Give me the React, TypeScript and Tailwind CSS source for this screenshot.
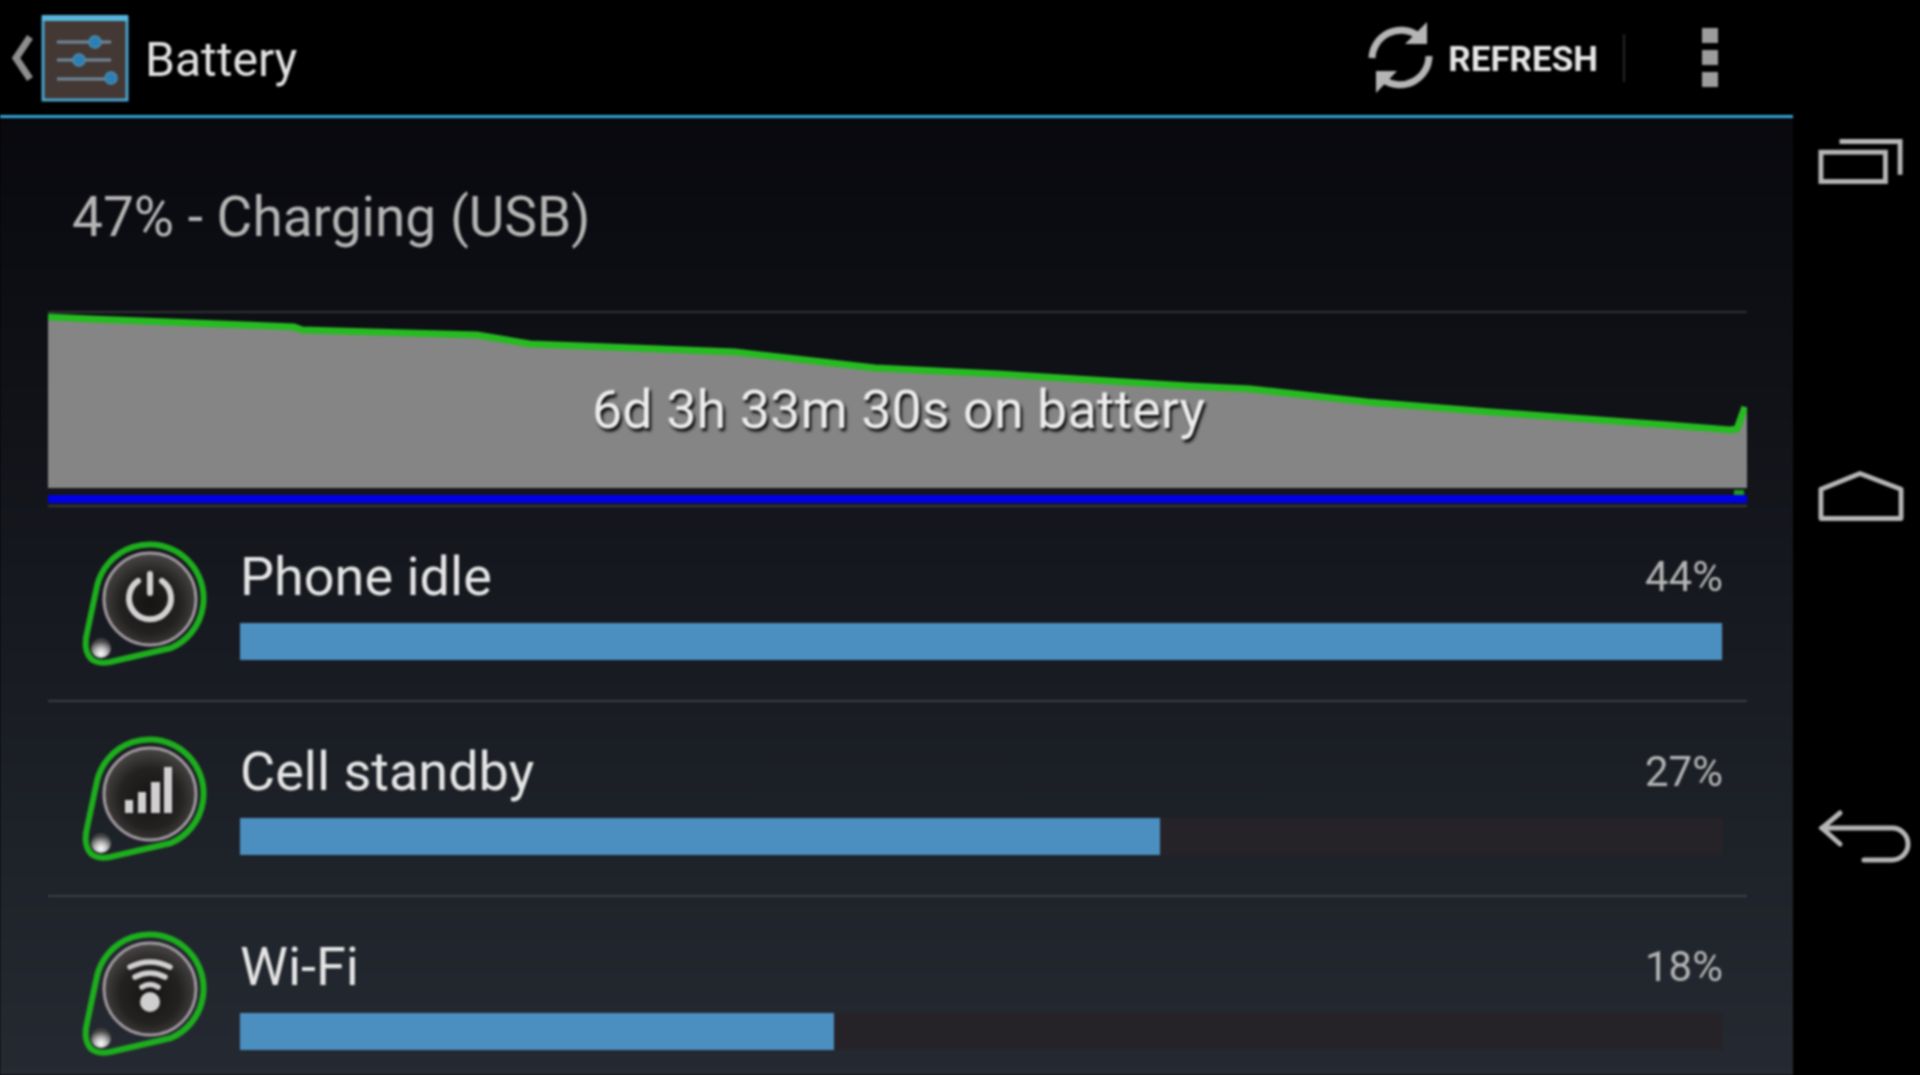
const font = { fontFamily: '"Roboto", "Liberation Sans", sans-serif' };

function Disc({ children }: { children: React.ReactNode }) {
  return (
    <svg width="130" height="130" viewBox="0 0 130 130" className="shrink-0" fill="none">
      <defs>
        <radialGradient id="discFill" cx="50%" cy="55%" r="55%">
          <stop offset="0%" stopColor="#161313" />
          <stop offset="60%" stopColor="#242121" />
          <stop offset="100%" stopColor="#4a4747" />
        </radialGradient>
        <radialGradient id="ballFill" cx="50%" cy="78%" r="65%">
          <stop offset="0%" stopColor="#ffffff" />
          <stop offset="45%" stopColor="#bcbcbc" />
          <stop offset="100%" stopColor="#3f3f3f" />
        </radialGradient>
      </defs>
      <path d="M17 45A54 54 0 1 1 91 107L30 121Q9 125 6 107Q5 100 7 92Z" stroke="#1dae1d" strokeWidth="6" strokeLinejoin="round" />
      <circle cx="70" cy="58" r="46" fill="url(#discFill)" stroke="#9f979d" strokeWidth="3" />
      <circle cx="21" cy="107" r="10" fill="url(#ballFill)" />
      {children}
    </svg>
  );
}

const PowerGlyph = () => (
  <g stroke="#d2d2d2" strokeWidth="6" strokeLinecap="round">
    <path d="M58 40A21 21 0 1 0 82 40" />
    <path d="M70 33V52" />
  </g>
);

const SignalGlyph = () => (
  <g fill="#d0d0d0">
    <rect x="45" y="64" width="8" height="13" />
    <rect x="58" y="56" width="8" height="21" />
    <rect x="71" y="46" width="9" height="31" />
    <rect x="84" y="31" width="8" height="46" />
  </g>
);

const WifiGlyph = () => (
  <g stroke="#cfcfcf" strokeWidth="5.5" strokeLinecap="round">
    <path d="M50 36Q70 26 90 36" />
    <path d="M55 46Q70 38 85 46" />
    <path d="M62 56Q70 51 78 56" />
    <circle cx="70" cy="71" r="10" fill="#cfcfcf" stroke="none" />
  </g>
);

const rows = [
  { name: "Phone idle", pct: "44%", width: 1482, glyph: <PowerGlyph /> },
  { name: "Cell standby", pct: "27%", width: 920, glyph: <SignalGlyph /> },
  { name: "Wi-Fi", pct: "18%", width: 594, glyph: <WifiGlyph /> },
];

function Row({ name, pct, width, glyph }: { name: string; pct: string; width: number; glyph: React.ReactNode }) {
  return (
    <div className="ml-[48px] w-[1699px] h-[195px] shrink-0 flex border-b-2 border-[#3a3d43] pl-[32px] pr-[24px]">
      <div className="pt-[34px]">
        <Disc>{glyph}</Disc>
      </div>
      <div className="ml-[30px] flex-1 pt-[40px]">
        <div className="flex justify-between h-[60px] items-center">
          <span className="text-[54px] leading-[60px] text-[#e4e4e4]">{name}</span>
          <span className="text-[42px] leading-[60px] text-[#b4b4b4]">{pct}</span>
        </div>
        <div className="mt-[16px] h-[37px] bg-[#262328]">
          <div className="h-full bg-[#4b8fc1]" style={{ width }} />
        </div>
      </div>
    </div>
  );
}

const greenPts =
  "0,4 42,6 246,14 254,17 429,22 482,31 687,39 827,55 950,61 1140,73 1202,76 1319,89 1442,99 1619,112 1682,117 1689,116 1697,94";

export default function App() {
  return (
    <div className="w-[1920px] h-[1075px] overflow-hidden bg-black">
      <div className="w-[1920px] h-[1075px] overflow-hidden flex bg-black blur-[0.9px]" style={font}>
        <div className="w-[1793px] h-full flex flex-col shrink-0 bg-gradient-to-b from-[#06060a] to-[#252a32] overflow-hidden">
          <header className="h-[118px] shrink-0 bg-black border-b-[3px] border-[#33a5d5] flex items-center relative">
            <svg width="24" height="50" viewBox="0 0 24 50" className="ml-[10px]" fill="none">
              <path d="M20 4L6 25L20 46" stroke="#8e8e8e" strokeWidth="7" />
            </svg>
            <svg width="88" height="88" viewBox="0 0 88 88" className="ml-[7px]" fill="none">
              <rect x="2" y="3" width="84" height="83" fill="#443835" stroke="#4aa3cc" strokeWidth="3" />
              <rect x="1" y="1" width="86" height="6" fill="#57b5dc" />
              <g stroke="#6f8a9a" strokeWidth="3">
                <path d="M16 28H70" />
                <path d="M16 46H70" />
                <path d="M16 65H74" />
              </g>
              <g fill="#2c7fb4" stroke="#4d8fb0" strokeWidth="1.5">
                <circle cx="54" cy="28" r="6" />
                <circle cx="38" cy="46" r="6" />
                <circle cx="70" cy="64" r="6" />
              </g>
            </svg>
            <span className="ml-[16px] pt-[4px] text-[48px] leading-none text-[#e2e2e2]">Battery</span>
            <div className="ml-auto flex items-center">
              <svg width="68" height="72" viewBox="0 0 68 72" fill="none">
                <path d="M5 36A29 29 0 0 1 50 13" stroke="#b5b5b5" strokeWidth="7" />
                <path d="M60 0V22H38Z" fill="#b5b5b5" />
                <path d="M62 34A29 29 0 0 1 17 58" stroke="#b5b5b5" strokeWidth="7" />
                <path d="M9 71V49H30Z" fill="#b5b5b5" />
              </svg>
              <span className="ml-[13px] pt-[4px] text-[35px] leading-none font-bold text-[#e6e6e6]">REFRESH</span>
              <div className="ml-[25px] w-[2px] h-[48px] bg-[#262626]" />
              <div className="ml-[77px] mr-[75px] flex flex-col gap-[7px]">
                <div className="w-[16px] h-[15px] bg-[#9c9c9c]" />
                <div className="w-[16px] h-[15px] bg-[#9c9c9c]" />
                <div className="w-[16px] h-[15px] bg-[#9c9c9c]" />
              </div>
            </div>
          </header>

          <div className="h-[193px] shrink-0 pl-[72px] pt-[69px]">
            <div className="text-[55px] leading-[60px] text-[#b4b4b4]">47% - Charging (USB)</div>
          </div>

          <div className="ml-[48px] w-[1699px] h-[196px] shrink-0 relative border-t-2 border-[#303236]">
            <svg width="1699" height="194" viewBox="0 0 1699 194" className="block">
              <polygon points={`${greenPts} 1699,94 1699,175 0,175`} fill="#858585" />
              <polyline points={greenPts} fill="none" stroke="#27bb22" strokeWidth="7" />
              <rect x="0" y="182" width="1699" height="8" fill="#0000e6" />
              <rect x="0" y="192" width="1699" height="2" fill="#3a3a3a" />
              <rect x="1686" y="177" width="10" height="5" fill="#1f9a1f" />
            </svg>
            <span className="absolute left-[544px] top-[67px] text-[54px] leading-[60px] text-[#ececec] whitespace-nowrap [text-shadow:2px_3px_3px_#000]">
              6d 3h 33m 30s on battery
            </span>
          </div>

          {rows.map((r) => (
            <Row key={r.name} {...r} />
          ))}
        </div>

        <nav className="flex-1 flex flex-col items-start pl-[25px]">
          <svg width="86" height="48" viewBox="0 0 88 48" className="mt-[137px]" fill="none" stroke="#b5b5b5" strokeWidth="5">
            <rect x="3" y="15" width="66" height="30" />
            <path d="M22 4H84V38" />
          </svg>
          <svg width="86" height="52" viewBox="0 0 88 52" className="mt-[285px]" fill="none" stroke="#b5b5b5" strokeWidth="5">
            <path d="M3 19L43 3L85 19V49H3Z" strokeLinejoin="round" />
          </svg>
          <svg width="96" height="54" viewBox="0 0 96 54" className="mt-[287px]" fill="none" stroke="#b5b5b5" strokeWidth="5" strokeLinecap="round">
            <path d="M22 4L4 19L22 35" />
            <path d="M4 19H74A16 16 0 0 1 74 51H46" />
          </svg>
        </nav>
      </div>
    </div>
  );
}
